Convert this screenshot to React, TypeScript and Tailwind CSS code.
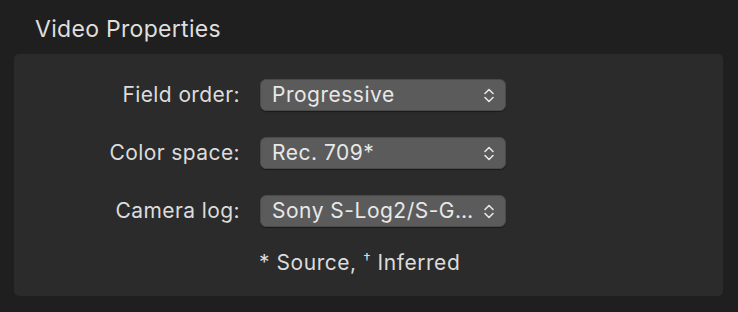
import React from "react";

function Chevrons() {
  return (
    <svg width="12" height="17" viewBox="0 0 12 17" fill="none" className="shrink-0">
      <path d="M2 6.5 L6 2.5 L10 6.5" stroke="#e6e6e6" strokeWidth="1.6" strokeLinecap="round" strokeLinejoin="round" />
      <path d="M2 10.5 L6 14.5 L10 10.5" stroke="#e6e6e6" strokeWidth="1.6" strokeLinecap="round" strokeLinejoin="round" />
    </svg>
  );
}

function Row({ label, value }: { label: string; value: string }) {
  return (
    <div className="flex items-center h-[32px]">
      <div className="w-[246px] text-right pr-[20px] text-[21px] tracking-[0.4px] text-[#dcdcdc] whitespace-nowrap">{label}</div>
      <div className="w-[246px] h-[32px] rounded-[6px] bg-[#5b5b5b] border border-[#4a4a4a] shadow-[0_1px_1px_rgba(0,0,0,0.4)] flex items-center justify-between pl-[11px] pr-[10px]">
        <span className="text-[21px] tracking-[0.5px] text-[#e8e8e8] whitespace-nowrap">{value}</span>
        <Chevrons />
      </div>
    </div>
  );
}

export default function App() {
  return (
    <div className="w-[738px] h-[312px] bg-[#1f1f1f] pt-[12px] px-[14px] pb-[16px] flex flex-col" style={{ fontFamily: "Inter, 'Noto Sans', sans-serif" }}>
      <div className="pl-[21px] h-[42px] text-[23px] tracking-[0.3px] text-[#dedede] leading-none pt-[6px]">Video Properties</div>
      <div className="w-[709px] h-[242px] bg-[#2b2b2b] rounded-[5px] flex flex-col pt-[25px] gap-[26px]">
        <Row label="Field order:" value="Progressive" />
        <Row label="Color space:" value="Rec. 709*" />
        <Row label="Camera log:" value="Sony S-Log2/S-G…" />
        <div className="pl-[245px] -mt-[6px] text-[21px] tracking-[0.55px] text-[#dcdcdc] whitespace-nowrap">
          * Source, <span className="text-[15px] relative -top-[6px]">†</span> Inferred
        </div>
      </div>
    </div>
  );
}
